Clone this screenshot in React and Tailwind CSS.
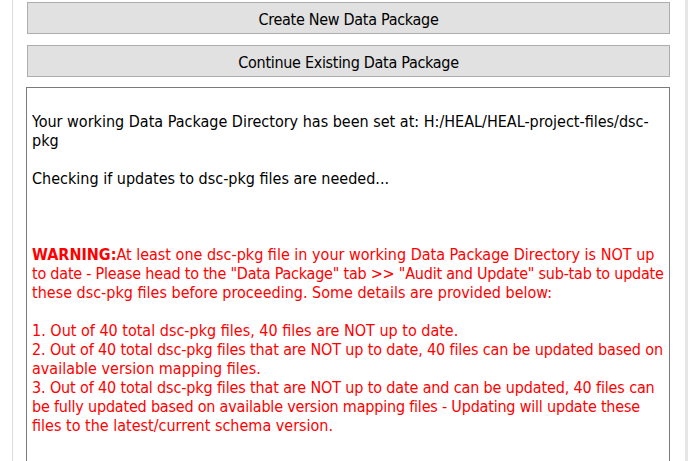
export default function App() {
  const font = { fontFamily: '"DejaVu Sans Condensed", "DejaVu Sans", sans-serif' };
  return (
    <div className="w-[700px] h-[461px] overflow-hidden bg-white flex" style={font}>
      {/* left gutter */}
      <div className="w-[12px] shrink-0" />
      <div className="w-px shrink-0 bg-[#dcdcdc]" />
      <div className="w-[672px] shrink-0 pl-[14px] pr-[14px] pt-[2px] flex flex-col">
        <button className="h-[32px] w-[643px] pt-[3px] bg-[#e1e1e1] border border-[#adadad] text-[16px] tracking-[-0.3px] text-black">
          Create New Data Package
        </button>
        <button className="mt-[11px] h-[32px] w-[643px] pt-[3px] bg-[#e1e1e1] border border-[#adadad] text-[16px] tracking-[-0.3px] text-black">
          Continue Existing Data Package
        </button>
        <div className="mt-[10px] -ml-px w-[644px] flex-1 border border-b-0 border-[#7a7a7a] px-[5px] pt-[5px] text-[16px] leading-[19px] whitespace-nowrap">
          <div className="h-[19px]" />
          <div className="text-black">Your working Data Package Directory has been set at: H:/HEAL/HEAL-project-files/dsc-</div>
          <div className="text-black">pkg</div>
          <div className="h-[19px]" />
          <div className="text-black">Checking if updates to dsc-pkg files are needed...</div>
          <div className="h-[57px]" />
          <div className="text-[#ff0000]">
            <div><span className="font-bold">WARNING:</span>At least one dsc-pkg file in your working Data Package Directory is NOT up</div>
            <div className="tracking-[-0.22px]">to date - Please head to the "Data Package" tab &gt;&gt; "Audit and Update" sub-tab to update</div>
            <div>these dsc-pkg files before proceeding. Some details are provided below:</div>
            <div className="h-[19px]" />
            <div>1. Out of 40 total dsc-pkg files, 40 files are NOT up to date.</div>
            <div className="tracking-[-0.14px]">2. Out of 40 total dsc-pkg files that are NOT up to date, 40 files can be updated based on</div>
            <div>available version mapping files.</div>
            <div className="tracking-[-0.14px]">3. Out of 40 total dsc-pkg files that are NOT up to date and can be updated, 40 files can</div>
            <div className="tracking-[-0.2px]">be fully updated based on available version mapping files - Updating will update these</div>
            <div>files to the latest/current schema version.</div>
          </div>
        </div>
      </div>
      <div className="w-[3px] shrink-0 bg-[#e6e6e6]" />
      <div className="flex-1 bg-white" />
    </div>
  );
}
